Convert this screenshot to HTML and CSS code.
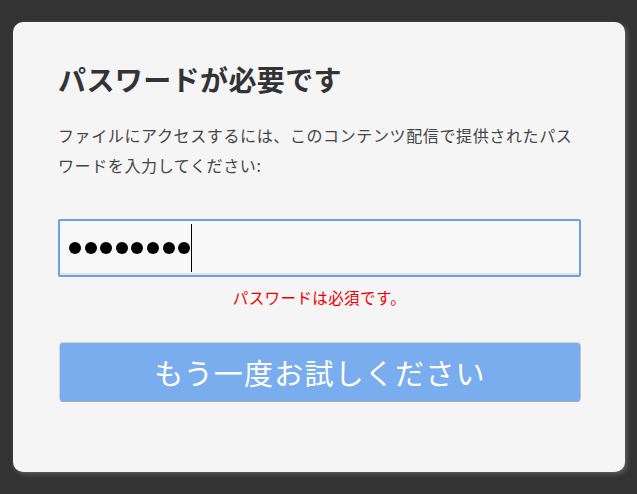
FILE: index.html
```html
<!DOCTYPE html>
<html lang="ja">
<head>
<meta charset="utf-8">
<title>パスワードが必要です</title>
<link rel="stylesheet" href="styles.css">
</head>
<body>
<div class="card">
  <h1 class="title">パスワードが必要です</h1>
  <p class="desc">ファイルにアクセスするには、このコンテンツ配信で提供されたパスワードを入力してください:</p>
  <div class="field">
    <span class="dots"><span class="dot"></span><span class="dot"></span><span class="dot"></span><span class="dot"></span><span class="dot"></span><span class="dot"></span><span class="dot"></span><span class="dot"></span></span><span class="caret"></span>
  </div>
  <div class="error">パスワードは必須です。</div>
  <button class="retry" type="button">もう一度お試しください</button>
</div>
</body>
</html>
```
FILE: styles.css
```css
html, body {
  margin: 0;
  padding: 0;
  background: #333333;
}
body {
  padding: 22px 12px 22px 13px;
  font-family: "Noto Sans CJK JP", "Noto Sans", sans-serif;
}
.card {
  box-sizing: border-box;
  width: 612px;
  height: 450px;
  background: #f5f5f5;
  border-radius: 10px;
  box-shadow: 2px 2px 5px rgba(255, 255, 255, 0.22);
  padding: 40px 44px 0 45px;
}
.title {
  margin: 0;
  font-size: 28px;
  line-height: 34px;
  font-weight: 700;
  letter-spacing: 0.4px;
  color: #333333;
}
.desc {
  margin: 24px 0 0 0;
  font-size: 16px;
  line-height: 30px;
  letter-spacing: 0.62px;
  color: #444444;
}
.field {
  box-sizing: border-box;
  margin-top: 39px;
  height: 58px;
  border: 2px solid #6f9fe3;
  border-radius: 2px;
  background: #f8f8f8;
  box-shadow: inset 0 -2px 0 #e2e2e2;
  display: flex;
  align-items: center;
  padding-left: 9px;
}
.dots {
  display: flex;
  gap: 3.6px;
}
.dot {
  width: 12px;
  height: 12px;
  border-radius: 50%;
  background: #000;
}
.caret {
  width: 1px;
  height: 48px;
  background: #000;
  margin-left: 1px;
}
.error {
  margin-top: 10px;
  text-align: center;
  color: #ee0000;
  font-size: 15.5px;
  line-height: 21px;
  letter-spacing: 0.4px;
}
.retry {
  display: block;
  box-sizing: border-box;
  width: 522px;
  height: 60px;
  margin-top: 34px;
  margin-left: 1px;
  background: #7aadee;
  border: 1px solid #d8d8d8;
  border-bottom-color: #aaaaaa;
  border-right-color: #c4c4c4;
  border-radius: 4px;
  color: #ffffff;
  font-family: "Noto Sans CJK JP", "Noto Sans", sans-serif;
  font-size: 29px;
  line-height: 1;
  letter-spacing: 1.2px;
  padding: 0;
}
```
